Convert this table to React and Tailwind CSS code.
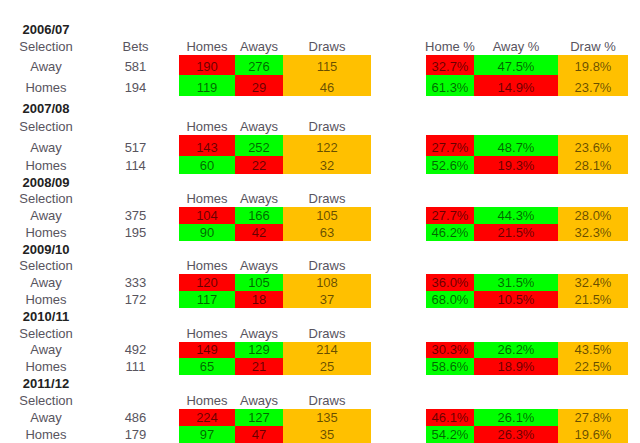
const seasons = [
  {
    year: '2006/07', first: true,
    h: ['h-[20px]', 'h-[17px]', 'h-[20px]', 'h-[21px]'],
    rows: [
      { sel: 'Away', bets: 581, n: [190, 276, 115], p: ['32.7%', '47.5%', '19.8%'] },
      { sel: 'Homes', bets: 194, n: [119, 29, 46], p: ['61.3%', '14.9%', '23.7%'] },
    ],
  },
  {
    year: '2007/08',
    h: ['h-[21px]', 'h-[18px]', 'h-[21px]', 'h-[18px]'],
    rows: [
      { sel: 'Away', bets: 517, n: [143, 252, 122], p: ['27.7%', '48.7%', '23.6%'] },
      { sel: 'Homes', bets: 114, n: [60, 22, 32], p: ['52.6%', '19.3%', '28.1%'] },
    ],
  },
  {
    year: '2008/09',
    h: ['h-[17px]', 'h-[16px]', 'h-[17px]', 'h-[17px]'],
    rows: [
      { sel: 'Away', bets: 375, n: [104, 166, 105], p: ['27.7%', '44.3%', '28.0%'] },
      { sel: 'Homes', bets: 195, n: [90, 42, 63], p: ['46.2%', '21.5%', '32.3%'] },
    ],
  },
  {
    year: '2009/10',
    h: ['h-[17px]', 'h-[16px]', 'h-[17px]', 'h-[17px]'],
    rows: [
      { sel: 'Away', bets: 333, n: [120, 105, 108], p: ['36.0%', '31.5%', '32.4%'] },
      { sel: 'Homes', bets: 172, n: [117, 18, 37], p: ['68.0%', '10.5%', '21.5%'] },
    ],
  },
  {
    year: '2010/11',
    h: ['h-[17px]', 'h-[17px]', 'h-[16px]', 'h-[17px]'],
    rows: [
      { sel: 'Away', bets: 492, n: [149, 129, 214], p: ['30.3%', '26.2%', '43.5%'] },
      { sel: 'Homes', bets: 111, n: [65, 21, 25], p: ['58.6%', '18.9%', '22.5%'] },
    ],
  },
  {
    year: '2011/12',
    h: ['h-[17px]', 'h-[17px]', 'h-[17px]', 'h-[17px]'],
    rows: [
      { sel: 'Away', bets: 486, n: [224, 127, 135], p: ['46.1%', '26.1%', '27.8%'] },
      { sel: 'Homes', bets: 179, n: [97, 47, 35], p: ['54.2%', '26.3%', '19.6%'] },
    ],
  },
];

// anchos de columna (px) tal como en la hoja
const W = ['w-[92px]', 'w-[87px]', 'w-[56px]', 'w-[48px]', 'w-[88px]', 'w-[55px]', 'w-[48px]', 'w-[84px]', 'w-[70px]'];

const RED = 'bg-[#ff0000]';
const GREEN = 'bg-[#00ff00]';
const ORANGE = 'bg-[#ffc000]';

function Cell({ w, bg = '', children }) {
  return (
    <div
      className={`${w} ${bg} shrink-0 h-full flex items-end justify-center whitespace-nowrap leading-[16px] ${
        bg ? 'text-black/60' : 'text-[#58545e]'
      }`}
    >
      {children}
    </div>
  );
}

function Season({ s }) {
  return (
    <div>
      <div className={`${s.h[0]} flex`}>
        <div className={`${W[0]} flex items-end justify-center leading-[16px] font-bold text-[#222]`}>{s.year}</div>
      </div>
      <div className={`${s.h[1]} flex`}>
        <Cell w={W[0]}>Selection</Cell>
        <Cell w={W[1]}>{s.first ? 'Bets' : ''}</Cell>
        <Cell w={W[2]}>Homes</Cell>
        <Cell w={W[3]}>Aways</Cell>
        <Cell w={W[4]}>Draws</Cell>
        <Cell w={W[5]} />
        <Cell w={W[6]}>{s.first ? 'Home %' : ''}</Cell>
        <Cell w={W[7]}>{s.first ? 'Away %' : ''}</Cell>
        <Cell w={W[8]}>{s.first ? 'Draw %' : ''}</Cell>
      </div>
      {s.rows.map((r, i) => {
        const away = r.sel === 'Away';
        return (
          <div key={r.sel} className={`${s.h[2 + i]} flex`}>
            <Cell w={W[0]}>{r.sel}</Cell>
            <Cell w={W[1]}>{r.bets}</Cell>
            <Cell w={W[2]} bg={away ? RED : GREEN}>{r.n[0]}</Cell>
            <Cell w={W[3]} bg={away ? GREEN : RED}>{r.n[1]}</Cell>
            <Cell w={W[4]} bg={ORANGE}>{r.n[2]}</Cell>
            <Cell w={W[5]} />
            <Cell w={W[6]} bg={away ? RED : GREEN}>{r.p[0]}</Cell>
            <Cell w={W[7]} bg={away ? GREEN : RED}>{r.p[1]}</Cell>
            <Cell w={W[8]} bg={ORANGE}>{r.p[2]}</Cell>
          </div>
        );
      })}
    </div>
  );
}

export default function App() {
  return (
    <div className="w-[640px] h-[443px] overflow-hidden bg-white pt-[18px] text-[13px] font-['Liberation_Sans',Arial,sans-serif]">
      {seasons.map((s) => (
        <Season key={s.year} s={s} />
      ))}
    </div>
  );
}
